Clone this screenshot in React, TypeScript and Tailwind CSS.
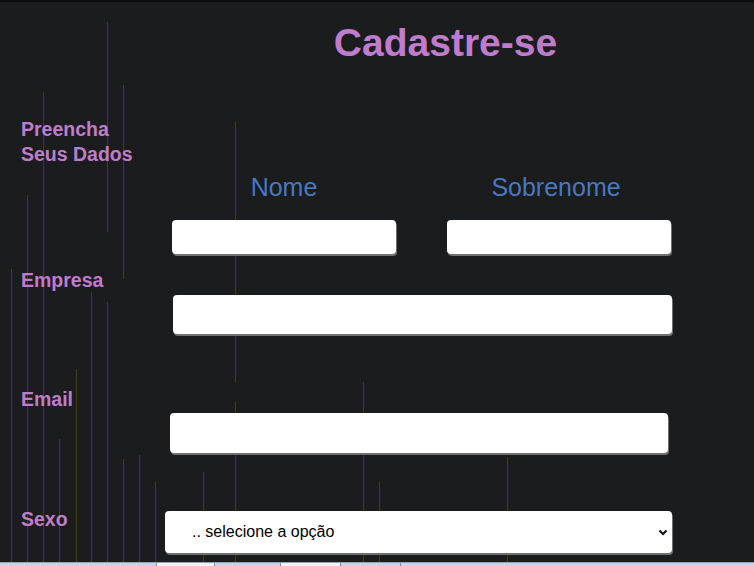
import { ChangeEvent, useState } from 'react';

// faint vertical streaks of the background texture: [x, y1, y2]
const streaks: [number, number, number][] = [
  [11, 267, 566],
  [27, 193, 566],
  [43, 90, 566],
  [59, 437, 566],
  [76, 367, 566],
  [91, 290, 566],
  [107, 20, 230],
  [107, 300, 566],
  [123, 83, 277],
  [123, 457, 566],
  [139, 453, 566],
  [155, 480, 566],
  [203, 470, 566],
  [235, 120, 380],
  [235, 400, 566],
  [363, 380, 566],
  [379, 480, 566],
  [507, 455, 566],
];

function Streaks() {
  return (
    <svg className="pointer-events-none absolute inset-0 h-full w-full" aria-hidden>
      {streaks.map(([x, y1, y2], i) => (
        <line key={i} x1={x + 0.5} x2={x + 0.5} y1={y1} y2={y2} stroke="#7a5f22" strokeOpacity={0.45} strokeWidth={1} />
      ))}
    </svg>
  );
}

const field =
  'block rounded-[4px] bg-white px-2 text-[15px] text-black shadow-[1px_2px_0_#707070] outline-none';

export default function App() {
  const [form, setForm] = useState({ nome: '', sobrenome: '', empresa: '', email: '', sexo: '' });

  const set = (key: keyof typeof form) => (e: ChangeEvent<HTMLInputElement | HTMLSelectElement>) =>
    setForm({ ...form, [key]: e.target.value });

  return (
    <div className="relative h-[566px] overflow-hidden border-t-2 border-[#0c0c0c] bg-[#1b1c1e] font-['Liberation_Sans',Arial,sans-serif]">
      <Streaks />

      <form className="relative flex flex-col" onSubmit={(e) => e.preventDefault()}>
        <h1 className="mt-[18px] pl-[137px] text-center text-[39px] font-bold leading-[46px] text-[#c07ccc]">
          Cadastre-se
        </h1>

        <p className="mt-[51px] pl-[21px] text-[19.5px] font-bold leading-[25px] text-[#c07ccc]">
          Preencha
          <br />
          Seus Dados
        </p>

        {/* Nome / Sobrenome */}
        <div className="ml-[172px] mt-[6px] grid w-[499px] grid-cols-[224px_224px] gap-x-[51px]">
          <label className="flex flex-col items-center">
            <span className="text-[25px] leading-[28px] text-[#4778c0]">Nome</span>
            <input value={form.nome} onChange={set('nome')} className={`${field} mt-[19px] h-[34px] w-[224px]`} />
          </label>
          <label className="flex flex-col items-center">
            <span className="-ml-[6px] text-[25px] leading-[28px] text-[#4778c0]">Sobrenome</span>
            <input value={form.sobrenome} onChange={set('sobrenome')} className={`${field} mt-[19px] h-[34px] w-[224px]`} />
          </label>
        </div>

        {/* Empresa */}
        <label className="mt-[14px] flex flex-col">
          <span className="pl-[21px] text-[19.5px] font-bold leading-[24px] text-[#c07ccc]">Empresa</span>
          <input value={form.empresa} onChange={set('empresa')} className={`${field} ml-[173px] mt-[3px] h-[39px] w-[499px]`} />
        </label>

        {/* Email */}
        <label className="mt-[53px] flex flex-col">
          <span className="pl-[21px] text-[19.5px] font-bold leading-[24px] text-[#c07ccc]">Email</span>
          <input type="email" value={form.email} onChange={set('email')} className={`${field} ml-[170px] mt-[2px] h-[40px] w-[498px]`} />
        </label>

        {/* Sexo */}
        <label className="mt-[54px] flex items-start">
          <span className="w-[165px] pl-[21px] text-[19.5px] font-bold leading-[24px] text-[#c07ccc]">Sexo</span>
          <span className="relative mt-[4px] block">
            <select
              value={form.sexo}
              onChange={set('sexo')}
              className={`${field} h-[42px] w-[507px] appearance-none pl-[27px] text-[16px]`}
            >
              <option value="">.. selecione a opção</option>
              <option value="f">Feminino</option>
              <option value="m">Masculino</option>
            </select>
            <svg className="pointer-events-none absolute right-[4px] top-[18px]" width="10" height="7" viewBox="0 0 10 7">
              <path d="M1.5 1.5 L5 5 L8.5 1.5" fill="none" stroke="#111" strokeWidth="2.2" />
            </svg>
          </span>
        </label>

        {/* bottom strip */}
        <div className="mt-[9px] flex h-[4px] border-t border-[#8fa3b8] bg-[#c6d6e8]">
          <div className="w-[156px]" />
          <div className="w-[59px] border-x border-[#7d8fa3] bg-[#eef3f8]" />
          <div className="w-[65px]" />
          <div className="w-[61px] border-x border-[#7d8fa3] bg-[#eef3f8]" />
          <div className="w-[60px] border-r border-[#7d8fa3]" />
        </div>
      </form>
    </div>
  );
}
